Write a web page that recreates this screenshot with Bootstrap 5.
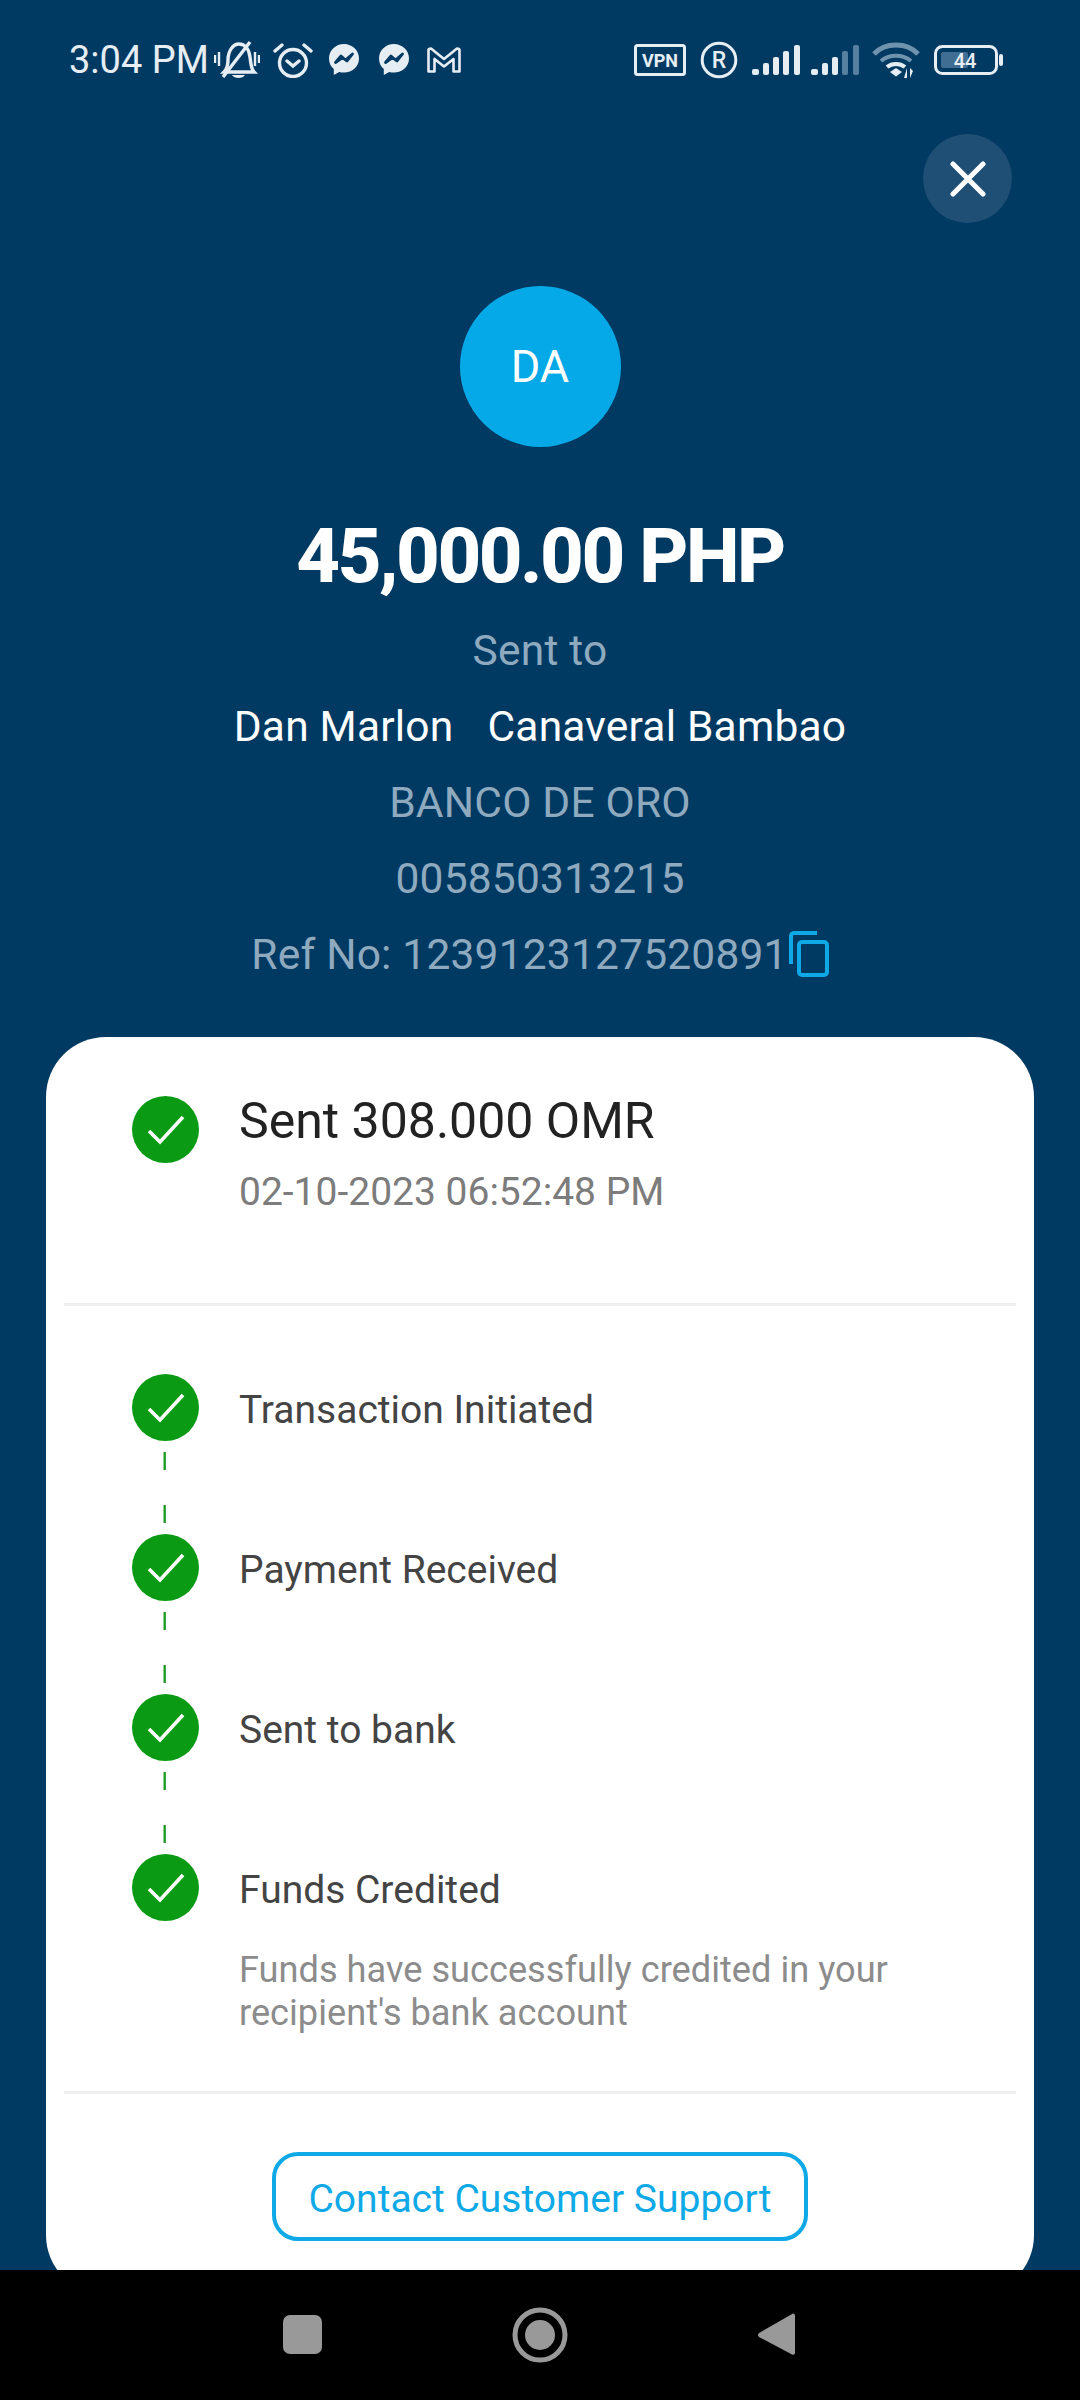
<!DOCTYPE html>
<html lang="en">
  <head>
    <meta charset="UTF-8" />
    <meta name="viewport" content="width=device-width, initial-scale=1.0" />
    <title>Transfer Details</title>
    <link href="https://cdn.jsdelivr.net/npm/bootstrap@5.3.0/dist/css/bootstrap.min.css" rel="stylesheet" />
    <style>
      body { width: 1080px; height: 2400px; overflow: hidden; background: #000; font-family: Roboto, "Liberation Sans", sans-serif; }
      .app-area { height: 2270px; overflow: hidden; background: #003a63; }
      .status-bar { height: 116px; padding: 3px 76px 0 69px; color: #e6edf3; }
      .status-time { font-size: 38px; line-height: 1; margin-right: 5px; }
      .status-right { gap: 14px; }
      .ic-alarm { margin-left: 13px; }
      .ic-msg { margin-left: 16px; }
      .ic-msg2 { margin-left: 20px; }
      .ic-gmail { margin-left: 18px; }
      .ic-signal2 { margin-left: -4px; }
      .ic-wifi { margin-left: -2px; }
      .close-btn { width: 89px; height: 89px; margin: 18px 68px 0 0; background: #1f4f75; border: 0; padding: 0; }
      .avatar { width: 161px; height: 161px; margin-top: 63px; background: #05a9e8; color: #fff; font-size: 45px; }
      .amount { font-size: 76px; font-weight: 800; letter-spacing: -2.5px; line-height: 84px; margin: 67px 0 15px; color: #fff; }
      .info-line { font-size: 42.5px; line-height: 76px; color: #8faabf; letter-spacing: 0.2px; }
      .info-line.name { color: #fff; }
      .name-gap { display: inline-block; width: 34px; }
      .copy-icon { margin: 0 0 3px 1px; }
      .info-block { margin-bottom: 44px; }
      .detail-card { margin: 0 46px; height: 1258px; background: #fff; border-radius: 60px; padding: 53px 18px 0; }
      .sent-row { height: 213px; padding-left: 68px; }
      .step-dot { width: 67px; height: 67px; flex: none; background: #0a9a14; }
      .sent-dot { margin-top: 6px; }
      .sent-text { margin-left: 40px; }
      .sent-title { font-size: 50px; line-height: 62px; color: #222; }
      .sent-date { font-size: 39px; line-height: 50px; margin-top: 15px; color: #7c7c7c; }
      .card-rule { height: 3px; background: #efefef; }
      .steps { padding: 68px 0 0 68px; height: 785px; }
      .step-row { height: 67px; }
      .step-label { font-size: 39px; margin-left: 40px; padding-top: 5px; color: #444; line-height: 1; }
      .step-line { display: block; width: 67px; height: 93px; }
      .step-note { font-size: 36.2px; line-height: 43px; color: #8c8c8c; margin: 27px 0 0 107px; }
      .support-btn { width: 536px; height: 89px; margin-top: 58px; border: 4px solid #0ea9e6; border-radius: 26px; background: #fff; color: #0ea9e6; font-size: 39px; line-height: 1; padding: 5px 0 0; }
      .nav-bar { height: 130px; background: #000; }
    </style>
  </head>
  <body>
    <div class="app-area">
      <!-- Status bar -->
      <div class="status-bar d-flex align-items-center justify-content-between">
        <div class="d-flex align-items-center">
          <span class="status-time">3:04 PM</span>
          <svg class="ic-mute" width="46" height="38" viewBox="0 0 46 38" fill="none" stroke="#e6edf3" stroke-width="3.4">
            <path d="M10 31c3-3 4-6 4-12 0-9 5-16 11-16 6 0 10 5 11 13 1 7 1 12 4 15H10z" />
            <path d="M36 1 9 36" />
            <path d="M1 14v8M5 11v14M41 11v14M45 14v8" stroke-width="2.4" />
            <path d="M18 34h13c-2 4-11 4-13 0z" fill="#e6edf3" stroke="none" />
          </svg>
          <svg class="ic-alarm" width="40" height="36" viewBox="0 0 40 36" fill="none" stroke="#e6edf3" stroke-width="3.4" stroke-linecap="round">
            <circle cx="20" cy="21" r="13.5" />
            <path d="M14 19l6 5 6-5M2 9l7-6M38 9l-7-6" />
          </svg>
          <svg class="ic-msg" width="30" height="31" viewBox="0 0 30 31">
            <path fill="#e6edf3" d="M15 0C6.700 0 0 6.200 0 14.500c0 4.300 1.800 8 4.800 10.600V31l5.400-3c1.500.4 3.100.6 4.800.6 8.300 0 15-6 15-14.100S23.300 0 15 0z" />
            <path fill="none" stroke="#003a63" stroke-width="2.800" stroke-linejoin="round" d="M6.500 18.500 12 12l4.500 4L23.500 10 18 17l-4.500-3.500z" />
          </svg>
          <svg class="ic-msg2" width="30" height="31" viewBox="0 0 30 31">
            <path fill="#e6edf3" d="M15 0C6.700 0 0 6.200 0 14.500c0 4.300 1.800 8 4.800 10.600V31l5.400-3c1.500.4 3.100.6 4.800.6 8.300 0 15-6 15-14.100S23.300 0 15 0z" />
            <path fill="none" stroke="#003a63" stroke-width="2.800" stroke-linejoin="round" d="M6.500 18.500 12 12l4.500 4L23.500 10 18 17l-4.500-3.500z" />
          </svg>
          <svg class="ic-gmail" width="34" height="26" viewBox="0 0 34 26" fill="none" stroke="#e6edf3" stroke-width="2.600" stroke-linejoin="round">
            <path d="M1.500 3.500Q1.500 1.500 4 1.500L17 12 30 1.500Q32.500 1.500 32.500 3.500V24.500H26.500V12L17 19.500 7.500 12V24.500H1.500z" />
          </svg>
        </div>
        <div class="status-right d-flex align-items-center">
          <svg width="52" height="32" viewBox="0 0 52 32">
            <rect x="1.500" y="1.500" width="49" height="29" rx="2" fill="none" stroke="#e6edf3" stroke-width="3" />
            <text x="26" y="23" text-anchor="middle" font-family="Roboto" font-weight="700" font-size="18" fill="#e6edf3">VPN</text>
          </svg>
          <svg width="38" height="38" viewBox="0 0 38 38">
            <circle cx="19" cy="19" r="16.800" fill="none" stroke="#e6edf3" stroke-width="3" />
            <text x="19" y="27" text-anchor="middle" font-family="Roboto" font-weight="500" font-size="23" fill="#e6edf3">R</text>
          </svg>
          <svg width="49" height="30" viewBox="0 0 49 30" fill="#e6edf3">
            <rect x="0" y="24" width="7" height="6" rx="2" /><rect x="11" y="18" width="6" height="12" rx="2" /><rect x="21" y="12" width="6" height="18" rx="2" /><rect x="31" y="6" width="6" height="24" rx="2" /><rect x="42" y="0" width="6" height="30" rx="2" />
          </svg>
          <svg class="ic-signal2" width="49" height="30" viewBox="0 0 49 30" fill="#e6edf3">
            <rect x="0" y="24" width="7" height="6" rx="2" /><rect x="11" y="18" width="6" height="12" rx="2" /><rect x="21" y="12" width="6" height="18" rx="2" /><rect x="31" y="6" width="6" height="24" rx="2" fill="#55809f" /><rect x="42" y="0" width="6" height="30" rx="2" fill="#55809f" />
          </svg>
          <svg class="ic-wifi" width="48" height="36" viewBox="0 0 48 36" fill="none">
            <path d="M2 12C13 0 35 0 46 12" stroke="#6f93ad" stroke-width="5" />
            <path d="M9 19c8-7 22-7 30 0" stroke="#6f93ad" stroke-width="4" />
            <path d="M15 25c5-4 13-4 18 0" stroke="#e6edf3" stroke-width="4" />
            <path d="M18 30l6-4 6 4-6 4.500z" fill="#e6edf3" />
            <path d="M35 26v10h-3zM38 36V26l3 3z" fill="#e6edf3" />
          </svg>
          <svg width="70" height="30" viewBox="0 0 70 30">
            <rect x="1.500" y="1.500" width="61" height="27" rx="7" fill="none" stroke="#e6edf3" stroke-width="3" />
            <rect x="7" y="7" width="27" height="16" rx="2" fill="#3f6e92" />
            <text x="31" y="23" text-anchor="middle" font-family="Roboto" font-size="20" font-weight="500" fill="#e6edf3">44</text>
            <rect x="65" y="9" width="4" height="12" rx="2" fill="#e6edf3" />
          </svg>
        </div>
      </div>

      <!-- Close -->
      <div class="d-flex justify-content-end">
        <button class="close-btn rounded-circle d-flex align-items-center justify-content-center" type="button" aria-label="Close">
          <svg width="36" height="36" viewBox="0 0 36 36" stroke="#fff" stroke-width="5" stroke-linecap="round"><path d="M3 3l30 30M33 3 3 33" /></svg>
        </button>
      </div>

      <!-- Recipient -->
      <div class="info-block d-flex flex-column align-items-center text-center">
        <div class="avatar rounded-circle d-flex align-items-center justify-content-center">DA</div>
        <div class="amount">45,000.00 PHP</div>
        <div class="info-line">Sent to</div>
        <div class="info-line name">Dan Marlon<span class="name-gap"></span>Canaveral Bambao</div>
        <div class="info-line">BANCO DE ORO</div>
        <div class="info-line">005850313215</div>
        <div class="info-line d-flex align-items-center">
          Ref No: 1239123127520891
          <svg class="copy-icon" width="40" height="46" viewBox="0 0 40 46" fill="none" stroke="#0ea9e6" stroke-width="4">
            <path d="M2 33V5a3 3 0 0 1 3-3h23" />
            <rect x="10" y="11" width="28" height="33" rx="3" />
          </svg>
        </div>
      </div>

      <!-- Card -->
      <div class="detail-card">
        <div class="sent-row d-flex align-items-start">
          <div class="step-dot sent-dot rounded-circle d-flex align-items-center justify-content-center">
            <svg width="38" height="30" viewBox="0 0 38 30" fill="none" stroke="#fff" stroke-width="3.600"><path d="M2 16l11 11L36 2" /></svg>
          </div>
          <div class="sent-text">
            <div class="sent-title">Sent 308.000 OMR</div>
            <div class="sent-date">02-10-2023 06:52:48 PM</div>
          </div>
        </div>
        <div class="card-rule"></div>

        <div class="steps">
          <div class="step-row d-flex align-items-center">
            <div class="step-dot rounded-circle d-flex align-items-center justify-content-center">
              <svg width="38" height="30" viewBox="0 0 38 30" fill="none" stroke="#fff" stroke-width="3.600"><path d="M2 16l11 11L36 2" /></svg>
            </div>
            <div class="step-label">Transaction Initiated</div>
          </div>
          <svg class="step-line" viewBox="0 0 67 93"><path d="M32.700 11V82" stroke="#1d9c26" stroke-width="2.400" stroke-dasharray="18 35" /></svg>
          <div class="step-row d-flex align-items-center">
            <div class="step-dot rounded-circle d-flex align-items-center justify-content-center">
              <svg width="38" height="30" viewBox="0 0 38 30" fill="none" stroke="#fff" stroke-width="3.600"><path d="M2 16l11 11L36 2" /></svg>
            </div>
            <div class="step-label">Payment Received</div>
          </div>
          <svg class="step-line" viewBox="0 0 67 93"><path d="M32.700 11V82" stroke="#1d9c26" stroke-width="2.400" stroke-dasharray="18 35" /></svg>
          <div class="step-row d-flex align-items-center">
            <div class="step-dot rounded-circle d-flex align-items-center justify-content-center">
              <svg width="38" height="30" viewBox="0 0 38 30" fill="none" stroke="#fff" stroke-width="3.600"><path d="M2 16l11 11L36 2" /></svg>
            </div>
            <div class="step-label">Sent to bank</div>
          </div>
          <svg class="step-line" viewBox="0 0 67 93"><path d="M32.700 11V82" stroke="#1d9c26" stroke-width="2.400" stroke-dasharray="18 35" /></svg>
          <div class="step-row d-flex align-items-center">
            <div class="step-dot rounded-circle d-flex align-items-center justify-content-center">
              <svg width="38" height="30" viewBox="0 0 38 30" fill="none" stroke="#fff" stroke-width="3.600"><path d="M2 16l11 11L36 2" /></svg>
            </div>
            <div class="step-label">Funds Credited</div>
          </div>
          <div class="step-note">Funds have successfully credited in your<br />recipient's bank account</div>
        </div>
        <div class="card-rule"></div>

        <div class="d-flex justify-content-center">
          <button class="support-btn btn" type="button">Contact Customer Support</button>
        </div>
      </div>
    </div>

    <!-- Android nav -->
    <div class="nav-bar d-flex align-items-center">
      <svg width="1080" height="130" viewBox="0 0 1080 130" fill="#999">
        <rect x="283" y="45" width="39" height="39" rx="7" />
        <circle cx="540" cy="65" r="25" fill="none" stroke="#999" stroke-width="5" />
        <circle cx="540" cy="65" r="15" />
        <path d="M793 43.500a2 2 0 0 1 2 1.500v38a2 2 0 0 1-3 1.500L759 67a2.500 2.500 0 0 1 0-4z" />
      </svg>
    </div>

    <script src="https://cdn.jsdelivr.net/npm/bootstrap@5.3.0/dist/js/bootstrap.bundle.min.js"></script>
  </body>
</html>
